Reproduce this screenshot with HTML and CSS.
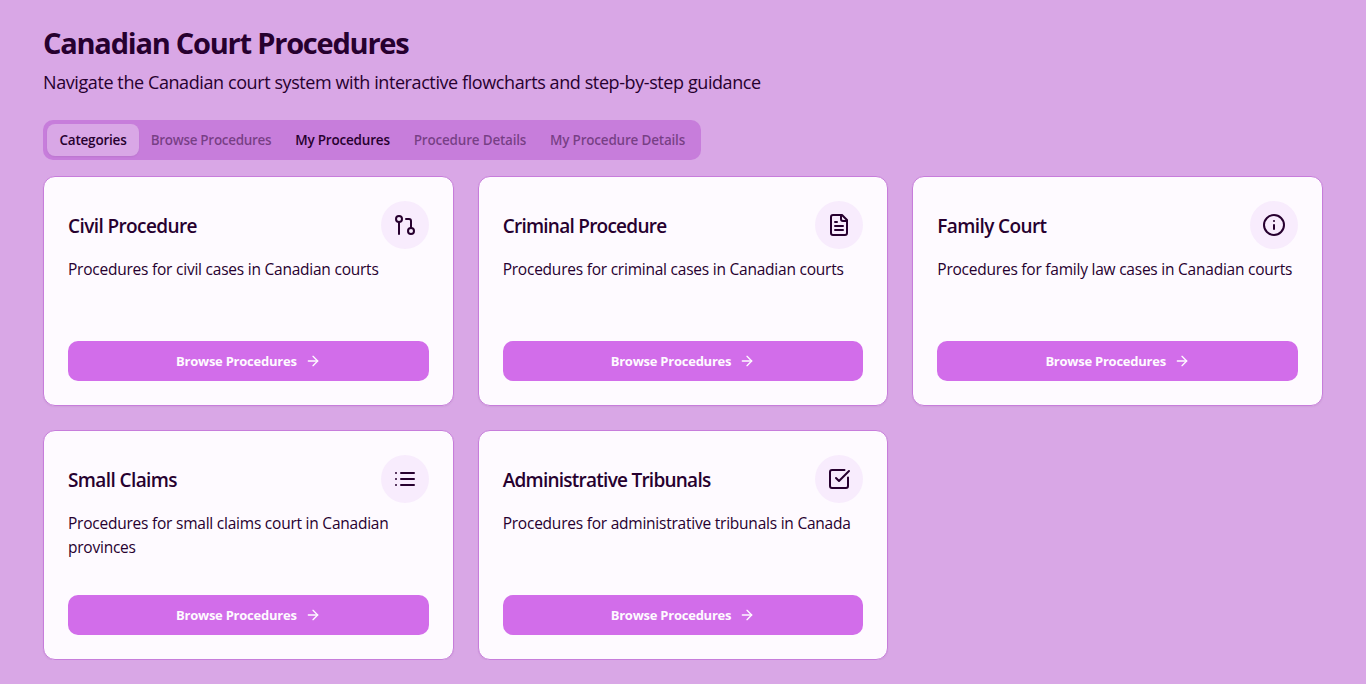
FILE: index.html
```html
<!DOCTYPE html>
<html lang="en">
<head>
<meta charset="utf-8">
<title>Canadian Court Procedures</title>
<link rel="stylesheet" href="styles.css">
</head>
<body>
<main class="page">
  <h1 class="title">Canadian Court Procedures</h1>
  <p class="subtitle">Navigate the Canadian court system with interactive flowcharts and step-by-step guidance</p>
  <div class="tabs" role="tablist">
    <button class="tab tab-categories active"><span>Categories</span></button>
    <button class="tab tab-browse" disabled><span>Browse Procedures</span></button>
    <button class="tab tab-mine"><span>My Procedures</span></button>
    <button class="tab tab-details" disabled><span>Procedure Details</span></button>
    <button class="tab tab-my-details" disabled><span>My Procedure Details</span></button>
  </div>
  <section class="grid">
    <article class="card">
      <div class="card-head"><h3 class="name"><span>Civil Procedure</span></h3>
        <div class="badge"><svg class="icon" viewBox="0 0 24 24"><circle cx="18" cy="18" r="3"/><circle cx="6" cy="6" r="3"/><path d="M13 6h3a2 2 0 0 1 2 2v7"/><path d="M6 9v12"/></svg></div></div>
      <p class="desc"><span>Procedures for civil cases in Canadian courts</span></p>
      <button class="browse"><span>Browse Procedures</span><svg class="arrow" viewBox="0 0 24 24"><path d="M5 12h14"/><path d="m12 5 7 7-7 7"/></svg></button>
    </article>
    <article class="card">
      <div class="card-head"><h3 class="name name-tight"><span>Criminal Procedure</span></h3>
        <div class="badge"><svg class="icon" viewBox="0 0 24 24"><path d="M15 2H6a2 2 0 0 0-2 2v16a2 2 0 0 0 2 2h12a2 2 0 0 0 2-2V7Z"/><path d="M14 2v4a2 2 0 0 0 2 2h4"/><path d="M10 9H8"/><path d="M16 13H8"/><path d="M16 17H8"/></svg></div></div>
      <p class="desc"><span>Procedures for criminal cases in Canadian courts</span></p>
      <button class="browse"><span>Browse Procedures</span><svg class="arrow" viewBox="0 0 24 24"><path d="M5 12h14"/><path d="m12 5 7 7-7 7"/></svg></button>
    </article>
    <article class="card">
      <div class="card-head"><h3 class="name"><span>Family Court</span></h3>
        <div class="badge"><svg class="icon" viewBox="0 0 24 24"><circle cx="12" cy="12" r="10"/><path d="M12 16v-4"/><path d="M12 8h.01"/></svg></div></div>
      <p class="desc"><span>Procedures for family law cases in Canadian courts</span></p>
      <button class="browse"><span>Browse Procedures</span><svg class="arrow" viewBox="0 0 24 24"><path d="M5 12h14"/><path d="m12 5 7 7-7 7"/></svg></button>
    </article>
    <article class="card">
      <div class="card-head"><h3 class="name"><span>Small Claims</span></h3>
        <div class="badge"><svg class="icon" viewBox="0 0 24 24"><path d="M3 12h.01"/><path d="M3 18h.01"/><path d="M3 6h.01"/><path d="M8 12h13"/><path d="M8 18h13"/><path d="M8 6h13"/></svg></div></div>
      <p class="desc"><span>Procedures for small claims court in Canadian<br>provinces</span></p>
      <button class="browse"><span>Browse Procedures</span><svg class="arrow" viewBox="0 0 24 24"><path d="M5 12h14"/><path d="m12 5 7 7-7 7"/></svg></button>
    </article>
    <article class="card">
      <div class="card-head"><h3 class="name name-tight"><span>Administrative Tribunals</span></h3>
        <div class="badge"><svg class="icon" viewBox="0 0 24 24"><path d="M21 10.5V19a2 2 0 0 1-2 2H5a2 2 0 0 1-2-2V5a2 2 0 0 1 2-2h12.5"/><path d="m9 11 3 3L22 4"/></svg></div></div>
      <p class="desc"><span>Procedures for administrative tribunals in Canada</span></p>
      <button class="browse"><span>Browse Procedures</span><svg class="arrow" viewBox="0 0 24 24"><path d="M5 12h14"/><path d="m12 5 7 7-7 7"/></svg></button>
    </article>
  </section>
</main>
</body>
</html>
```
FILE: styles.css
```css
* { box-sizing: border-box; margin: 0; padding: 0; }
body {
  background: #d9a7e6;
  color: #27002f;
  font-family: "Segoe UI", "Open Sans", "Noto Sans", sans-serif;
}
.page { max-width: 1280px; margin: 0 auto; padding-top: 23px; }
.title { font-size: 29px; line-height: 40px; font-weight: 700; letter-spacing: -1.23px; white-space: nowrap; }
.subtitle { margin-top: 5px; font-size: 18px; line-height: 28px; letter-spacing: -0.41px; white-space: nowrap; }
.tabs {
  display: flex;
  width: 658px;
  height: 40px;
  margin-top: 24px;
  padding: 4px;
  border-radius: 10px;
  background: #c77ddb;
}
.tab {
  flex: none;
  border: 0;
  border-radius: 8px;
  background: transparent;
  color: #27002f;
  font: 600 13.5px/20px "Segoe UI", "Open Sans", sans-serif;
  letter-spacing: -0.2px;
  white-space: nowrap;
}
.tab:disabled { color: rgba(39, 0, 47, .5); }
.tab.active { background: #d9a7e6; box-shadow: 0 1px 2px rgba(0, 0, 0, .06); }
.tab-categories { width: 92px; }
.tab-browse { width: 144px; letter-spacing: -0.3px; }
.tab-mine { width: 119px; }
.tab-details { width: 136px; }
.tab-my-details { width: 159px; }
.grid { display: grid; grid-template-columns: repeat(3, 1fr); gap: 24px; margin-top: 16px; }
.card {
  display: flex;
  flex-direction: column;
  height: 230px;
  padding: 24px;
  border: 1px solid #c77ddb;
  border-radius: 12px;
  background: #fefaff;
  box-shadow: 0 1px 2px rgba(0, 0, 0, .05);
}
.card-head { display: flex; align-items: center; justify-content: space-between; }
.name { font-size: 19px; line-height: 28px; font-weight: 600; letter-spacing: -0.6px; white-space: nowrap; padding-top: 2px; }
.name-tight { letter-spacing: -0.75px; }
.badge { display: flex; align-items: center; justify-content: center; width: 48px; height: 48px; border-radius: 50%; background: #f8ecfd; }
.icon, .arrow { fill: none; stroke: currentColor; stroke-width: 2; stroke-linecap: round; stroke-linejoin: round; }
.icon { width: 24px; height: 24px; }
.desc { margin-top: 8px; font-size: 15.5px; line-height: 24px; letter-spacing: -0.23px; white-space: nowrap; }
.browse {
  display: flex;
  align-items: center;
  justify-content: center;
  gap: 8px;
  height: 40px;
  margin-top: auto;
  border: 0;
  border-radius: 10px;
  background: #d26dea;
  color: #fefaff;
  font: 700 13px/20px "Segoe UI", "Open Sans", sans-serif;
  letter-spacing: -0.24px;
}
.arrow { width: 16px; height: 16px; }
```
